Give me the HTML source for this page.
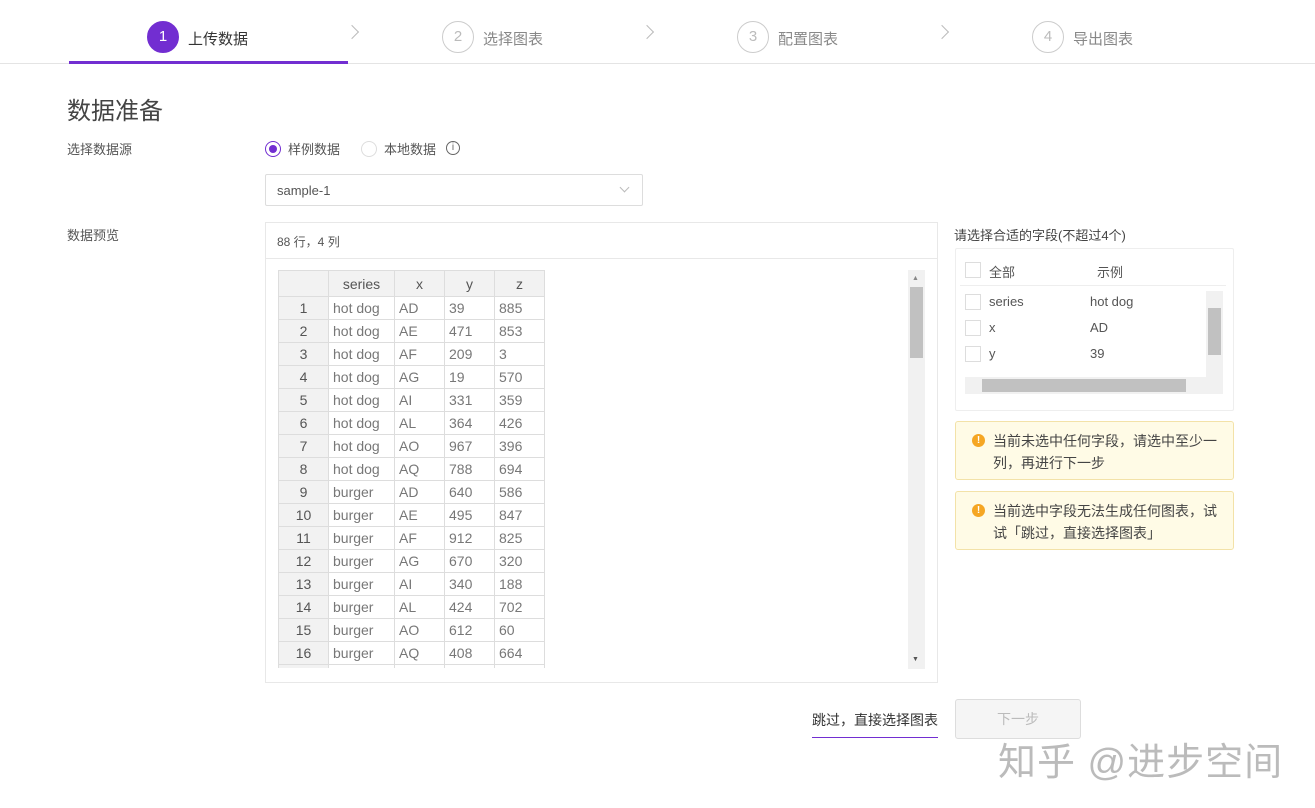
<!DOCTYPE html><html><head><meta charset="utf-8"><style>
*{box-sizing:border-box;margin:0;padding:0}
body{width:1315px;height:808px;background:#fff;font-family:"Liberation Sans","Noto Sans CJK SC",sans-serif;color:#555;position:relative;overflow:hidden;font-size:13px}
.a{position:absolute}
.circ{position:absolute;width:32px;height:32px;border-radius:50%;border:1px solid #ccc;color:#bbb;text-align:center;line-height:30px;font-size:15px;top:21px}
.st{position:absolute;top:28px;font-size:15px;color:#888}
.chev{position:absolute;top:27px;width:10px;height:10px;border-right:1px solid #bbb;border-top:1px solid #bbb;transform:rotate(45deg)}
.clip{position:absolute;left:278px;top:270px;width:300px;height:398px;overflow:hidden}
table{border-collapse:collapse;font-size:14px;color:#777}
td{border:1px solid #ddd;height:23px;padding:0 4px;white-space:nowrap}
td:first-child{background:#f2f2f2;text-align:center;color:#555}
tr:first-child td{background:#f2f2f2;text-align:center;color:#555;height:26px}
.cb{position:absolute;width:16px;height:16px;border:1px solid #ddd;background:#fff}
.alert{position:absolute;left:955px;width:279px;height:59px;background:#fffbe6;border:1px solid #f3e2a8;border-radius:3px;font-size:14px;color:#444;line-height:22px;padding:8px 12px 0 37px}
.alert i{position:absolute;left:16px;top:12px;width:13px;height:13px;border-radius:50%;background:#f5a623;color:#fff;font-size:10px;line-height:13px;text-align:center;font-style:normal;font-weight:bold}
</style></head><body>
<div class="a" style="left:0;top:63px;width:1315px;height:1px;background:#e4e4e4"></div>
<div class="a" style="left:69px;top:61px;width:279px;height:3px;background:#722ed1"></div>
<div class="circ" style="left:147px;background:#722ed1;border-color:#722ed1;color:#fff">1</div>
<div class="st" style="left:188px;color:#333">上传数据</div>
<div class="chev" style="left:347px"></div>
<div class="circ" style="left:442px">2</div><div class="st" style="left:483px">选择图表</div>
<div class="chev" style="left:642px"></div>
<div class="circ" style="left:737px">3</div><div class="st" style="left:778px">配置图表</div>
<div class="chev" style="left:937px"></div>
<div class="circ" style="left:1032px">4</div><div class="st" style="left:1073px">导出图表</div>

<div class="a" style="left:67px;top:91px;font-size:24px;color:#444">数据准备</div>
<div class="a" style="left:67px;top:139px;color:#555">选择数据源</div>
<div class="a" style="left:265px;top:141px;width:16px;height:16px;border-radius:50%;border:1px solid #722ed1"><div style="margin:3px;width:8px;height:8px;border-radius:50%;background:#722ed1"></div></div>
<div class="a" style="left:288px;top:139px;color:#555">样例数据</div>
<div class="a" style="left:361px;top:141px;width:16px;height:16px;border-radius:50%;border:1px solid #ddd"></div>
<div class="a" style="left:384px;top:139px;color:#555">本地数据</div>
<div class="a" style="left:446px;top:141px;width:14px;height:14px;border-radius:50%;border:1px solid #666;font-size:10px;text-align:center;line-height:12px;color:#666">i</div>
<div class="a" style="left:265px;top:174px;width:378px;height:32px;border:1px solid #ddd;border-radius:2px;padding:8px 11px;color:#555">sample-1</div>
<div class="a" style="left:621px;top:184px;width:7px;height:7px;border-right:1px solid #bbb;border-bottom:1px solid #bbb;transform:rotate(45deg)"></div>

<div class="a" style="left:67px;top:225px">数据预览</div>
<div class="a" style="left:265px;top:222px;width:673px;height:461px;border:1px solid #e8e8e8"></div>
<div class="a" style="left:265px;top:258px;width:673px;height:1px;background:#e8e8e8"></div>
<div class="a" style="left:277px;top:233px;font-size:12px;color:#555">88 行，4 列</div>
<div class="clip"><table>
<tr><td style="width:50px"></td><td style="width:66px">series</td><td style="width:50px">x</td><td style="width:50px">y</td><td style="width:50px">z</td></tr>
<tr><td>1</td><td>hot dog</td><td>AD</td><td>39</td><td>885</td></tr>
<tr><td>2</td><td>hot dog</td><td>AE</td><td>471</td><td>853</td></tr>
<tr><td>3</td><td>hot dog</td><td>AF</td><td>209</td><td>3</td></tr>
<tr><td>4</td><td>hot dog</td><td>AG</td><td>19</td><td>570</td></tr>
<tr><td>5</td><td>hot dog</td><td>AI</td><td>331</td><td>359</td></tr>
<tr><td>6</td><td>hot dog</td><td>AL</td><td>364</td><td>426</td></tr>
<tr><td>7</td><td>hot dog</td><td>AO</td><td>967</td><td>396</td></tr>
<tr><td>8</td><td>hot dog</td><td>AQ</td><td>788</td><td>694</td></tr>
<tr><td>9</td><td>burger</td><td>AD</td><td>640</td><td>586</td></tr>
<tr><td>10</td><td>burger</td><td>AE</td><td>495</td><td>847</td></tr>
<tr><td>11</td><td>burger</td><td>AF</td><td>912</td><td>825</td></tr>
<tr><td>12</td><td>burger</td><td>AG</td><td>670</td><td>320</td></tr>
<tr><td>13</td><td>burger</td><td>AI</td><td>340</td><td>188</td></tr>
<tr><td>14</td><td>burger</td><td>AL</td><td>424</td><td>702</td></tr>
<tr><td>15</td><td>burger</td><td>AO</td><td>612</td><td>60</td></tr>
<tr><td>16</td><td>burger</td><td>AQ</td><td>408</td><td>664</td></tr>
<tr><td>&nbsp;</td><td></td><td></td><td></td><td></td></tr>
</table></div>
<div class="a" style="left:908px;top:270px;width:17px;height:399px;background:#f1f1f1"></div>
<div class="a" style="left:910px;top:287px;width:13px;height:71px;background:#c1c1c1"></div>
<div class="a" style="left:912px;top:275px;font-size:7px;color:#888">▲</div>
<div class="a" style="left:912px;top:656px;font-size:7px;color:#555">▼</div>

<div class="a" style="left:954px;top:225px;color:#444">请选择合适的字段(不超过4个)</div>
<div class="a" style="left:955px;top:248px;width:279px;height:163px;border:1px solid #eee;border-radius:2px"></div>
<div class="cb" style="left:965px;top:262px"></div><div class="a" style="left:989px;top:262px">全部</div><div class="a" style="left:1097px;top:262px">示例</div>
<div class="a" style="left:960px;top:285px;width:266px;height:1px;background:#eee"></div>
<div class="cb" style="left:965px;top:294px"></div><div class="a" style="left:989px;top:294px">series</div><div class="a" style="left:1090px;top:294px">hot dog</div>
<div class="cb" style="left:965px;top:320px"></div><div class="a" style="left:989px;top:320px">x</div><div class="a" style="left:1090px;top:320px">AD</div>
<div class="cb" style="left:965px;top:346px"></div><div class="a" style="left:989px;top:346px">y</div><div class="a" style="left:1090px;top:346px">39</div>
<div class="a" style="left:1206px;top:291px;width:17px;height:86px;background:#f1f1f1"></div>
<div class="a" style="left:1208px;top:308px;width:13px;height:47px;background:#c1c1c1"></div>
<div class="a" style="left:965px;top:377px;width:258px;height:17px;background:#f1f1f1"></div>
<div class="a" style="left:982px;top:379px;width:204px;height:13px;background:#c1c1c1"></div>
<div class="alert" style="top:421px"><i>!</i>当前未选中任何字段，请选中至少一列，再进行下一步</div>
<div class="alert" style="top:491px"><i>!</i>当前选中字段无法生成任何图表，试试「跳过，直接选择图表」</div>

<div class="a" style="left:812px;top:710px;color:#333;font-size:14px">跳过，直接选择图表</div>
<div class="a" style="left:812px;top:737px;width:126px;height:1px;background:#722ed1"></div>
<div class="a" style="left:955px;top:699px;width:126px;height:40px;border:1px solid #ddd;border-radius:3px;background:#f5f5f5;color:#bbb;text-align:center;line-height:38px;font-size:14px">下一步</div>
<div class="a" style="left:998px;top:731px;font-size:38px;color:#bbb;letter-spacing:1px">知乎 @进步空间</div>
</body></html>
